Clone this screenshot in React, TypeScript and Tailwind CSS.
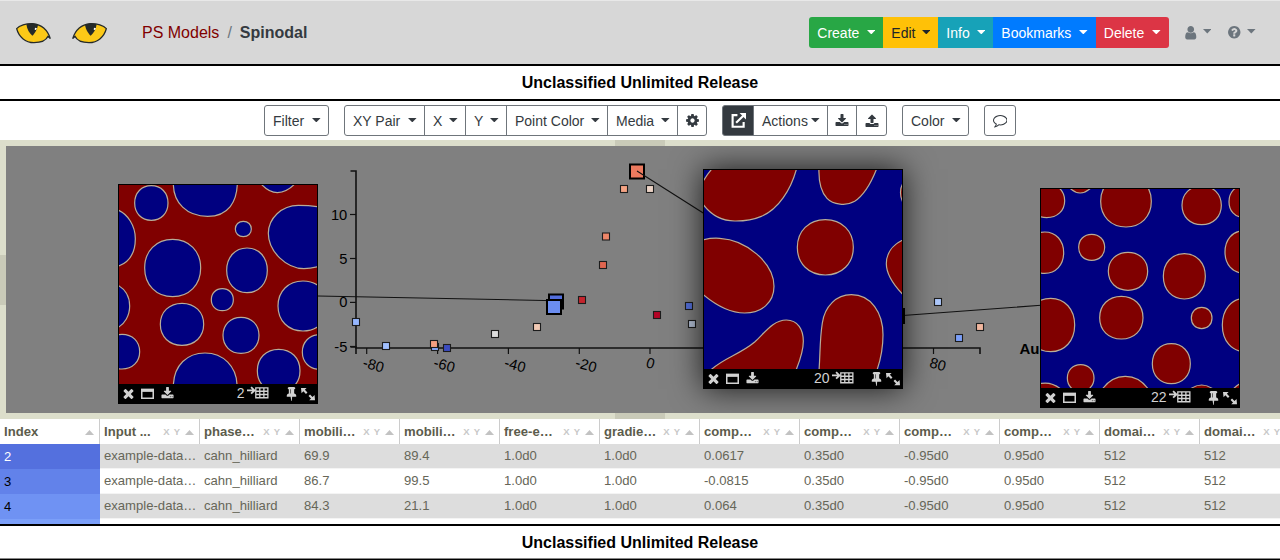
import React from "react";

const ICONS = {
  times:
    "M1490 1322q0 40-28 68l-136 136q-28 28-68 28t-68-28l-294-294-294 294q-28 28-68 28t-68-28l-136-136q-28-28-28-68t28-68l294-294-294-294q-28-28-28-68t28-68l136-136q28-28 68-28t68 28l294 294 294-294q28-28 68-28t68 28l136 136q28 28 28 68t-28 68l-294 294 294 294q28 28 28 68z",
  download:
    "M1344 1344q0-26-19-45t-45-19-45 19-19 45 19 45 45 19 45-19 19-45zm256 0q0-26-19-45t-45-19-45 19-19 45 19 45 45 19 45-19 19-45zm128-224v320q0 40-28 68t-68 28h-1472q-40 0-68-28t-28-68v-320q0-40 28-68t68-28h465l135 136q58 56 136 56t136-56l136-136h464q40 0 68 28t28 68zm-325-569q17 41-14 70l-448 448q-18 19-45 19t-45-19l-448-448q-31-29-14-70 17-39 59-39h256v-448q0-26 19-45t45-19h256q26 0 45 19t19 45v448h256q42 0 59 39z",
  upload:
    "M1344 1472q0-26-19-45t-45-19-45 19-19 45 19 45 45 19 45-19 19-45zm256 0q0-26-19-45t-45-19-45 19-19 45 19 45 45 19 45-19 19-45zm128-224v320q0 40-28 68t-68 28h-1472q-40 0-68-28t-28-68v-320q0-40 28-68t68-28h427q21 56 70.5 92t110.5 36h256q61 0 110.5-36t70.5-92h427q40 0 68 28t28 68zm-325-648q-17 40-59 40h-256v448q0 26-19 45t-45 19h-256q-26 0-45-19t-19-45v-448h-256q-42 0-59-40-17-39 14-69l448-448q18-19 45-19t45 19l448 448q31 30 14 69z",
  cog: "M1152 896q0-106-75-181t-181-75-181 75-75 181 75 181 181 75 181-75 75-181zm512-109v222q0 12-8 23t-20 13l-185 28q-19 54-39 91 35 50 107 138 10 12 10 25t-9 23q-27 37-99 108t-94 71q-12 0-26-9l-138-108q-44 23-91 38-16 136-29 186-7 28-36 28h-222q-14 0-24.5-8.5t-11.5-21.5l-28-184q-49-16-90-37l-141 107q-10 9-25 9-14 0-25-11-126-114-165-168-7-10-7-23 0-12 8-23 15-21 51-66.5t54-70.5q-27-50-41-99l-183-27q-13-2-21-12.5t-8-23.5v-222q0-12 8-23t19-13l186-28q14-46 39-92-40-57-107-138-10-12-10-24 0-10 9-23 26-36 98.5-107.5t94.5-71.5q13 0 26 10l138 107q44-23 91-38 16-136 29-186 7-28 36-28h222q14 0 24.5 8.5t11.5 21.5l28 184q49 16 90 37l142-107q9-9 24-9 13 0 25 10 129 119 165 170 7 8 7 22 0 12-8 23-15 21-51 66.5t-54 70.5q26 50 41 98l183 28q13 2 21 12.5t8 23.5z",
  user: "M1536 1399q0 109-62.5 187t-150.5 78h-854q-88 0-150.5-78t-62.5-187q0-85 8.5-160.5t31.5-152 58.5-131 94-89 134.5-34.5q131 128 313 128t313-128q76 0 134.5 34.5t94 89 58.5 131 31.5 152 8.5 160.5zm-256-887q0 159-112.5 271.5t-271.5 112.5-271.5-112.5-112.5-271.5 112.5-271.5 271.5-112.5 271.5 112.5 112.5 271.5z",
  question:
    "M1024 1376v-192q0-14-9-23t-23-9h-192q-14 0-23 9t-9 23v192q0 14 9 23t23 9h192q14 0 23-9t9-23zm256-672q0-88-55.5-163t-138.5-116-170-41q-243 0-371 213-15 24 8 42l132 100q7 6 19 6 16 0 25-12 53-68 86-92 34-24 86-24 48 0 85.5 26t37.5 59q0 38-20 61t-68 45q-63 28-115.5 86.5t-52.5 125.5v36q0 14 9 23t23 9h192q14 0 23-9t9-23q0-19 21.5-49.5t54.5-49.5q32-18 49-28.5t46-35 44.5-48 28-60.5 12.5-81zm384 192q0 209-103 385.5t-279.5 279.5-385.5 103-385.5-103-279.5-279.5-103-385.5 103-385.5 279.5-279.5 385.5-103 385.5 103 279.5 279.5 103 385.5z",
  comment:
    "M896 384q-204 0-381.5 69.5t-282 187.5-104.5 255q0 112 71.5 213.5t201.5 175.5l87 50-27 96q-24 91-70 172 152-63 275-171l43-38 57 6q69 8 130 8 204 0 381.5-69.5t282-187.5 104.5-255-104.5-255-282-187.5-381.5-69.5zm896 512q0 174-120 321.5t-326 233-450 85.5q-70 0-145-8-198 175-460 242-49 14-114 22h-5q-15 0-27-10.5t-16-27.5v-1q-3-4-.5-12t2-10 4.5-9.5l6-9 7-8.5 8-9q7-8 31-34.5t34.5-38 31-39.5 32.5-51 27-59 26-76q-157-89-247.5-220t-90.5-281q0-174 120-321.5t326-233 450-85.5 450 85.5 326 233 120 321.5z",
  pin: "M800 864v-448q0-14-9-23t-23-9-23 9-9 23v448q0 14 9 23t23 9 23-9 9-23zm672 352q0 26-19 45t-45 19h-429l-51 483q-2 12-10.5 20.5t-20.5 8.5h-1q-27 0-32-27l-76-485h-404q-26 0-45-19t-19-45q0-123 78.5-221.5t177.5-98.5v-512q-52 0-90-38t-38-90 38-90 90-38h640q52 0 90 38t38 90-38 90-90 38v512q99 0 177.5 98.5t78.5 221.5z",
};

function Icon({ name, className = "size-3.5" }: { name: keyof typeof ICONS; className?: string }) {
  return (
    <svg viewBox="0 0 1792 1792" className={`shrink-0 fill-current ${className}`}>
      <path d={ICONS[name]} />
    </svg>
  );
}

function Caret() {
  return (
    <svg viewBox="0 0 8.6 4.4" className="mb-0.5 h-[4.4px] w-[8.6px] shrink-0 fill-current">
      <path d="M0 0H8.6L4.3 4.4Z" />
    </svg>
  );
}

function Eye({ mirrored = false }: { mirrored?: boolean }) {
  return (
    <svg viewBox="48 64 105 66" className="h-[22px] w-[35px]">
      <g transform={mirrored ? "translate(201 0) scale(-1 1)" : undefined}>
        <path d="M50 83C58 75 78 68 98 69C128 72 144 90 145 104C140 119 122 126 102 126C76 126 56 108 50 83Z" fill="#fcc917" />
        <path d="M79 71C81 86 88 98 97 105C104 99 112 86 114 72C100 67 90 68 79 71Z" fill="#252a29" />
        <path
          d="M50 84C58 75 78 68 98 69C128 72 144 92 151 114C148 110 146 108 144 107C138 120 122 126 102 126C76 126 56 108 50 84Z"
          fill="none"
          stroke="#252a29"
          strokeWidth="4"
        />
      </g>
      <path d="M105 81L111 83L108 88L104 87Z" fill="#fff" transform={mirrored ? "translate(9 0)" : undefined} />
    </svg>
  );
}

function Banner() {
  return (
    <div className="pt-px text-center text-[16px] leading-[32px] font-bold text-black">Unclassified Unlimited Release</div>
  );
}

const MENUS = [
  { label: "Create", style: "w-[74px] rounded-l-[3px] bg-[#28a745] text-white" },
  { label: "Edit", style: "w-[55px] bg-[#ffc107] text-[#212529]" },
  { label: "Info", style: "w-[55px] bg-[#17a2b8] text-white" },
  { label: "Bookmarks", style: "w-[102.5px] bg-[#007bff] text-white" },
  { label: "Delete", style: "w-[73px] rounded-r-[3px] bg-[#dc3545] text-white" },
];

function Header() {
  return (
    <header className="flex h-[66px] items-center border-t border-b-2 border-t-[#e8e8e8] border-b-black bg-[#d7d7d7] pl-4">
      <div className="flex gap-[21px]">
        <Eye />
        <Eye mirrored />
      </div>
      <div className="ml-[35px] flex gap-2 pt-px text-[16px] text-[#343a40]">
        <span className="text-[#800000]">PS Models</span>
        <span className="text-[#6c757d]">/</span>
        <span className="font-bold">Spinodal</span>
      </div>
      <div className="ml-auto flex h-[31px]">
        {MENUS.map((m) => (
          <button key={m.label} className={`flex items-center justify-between px-2 pt-px ${m.style}`}>
            {m.label}
            <Caret />
          </button>
        ))}
      </div>
      <div className="ml-3.5 flex items-center gap-[4.5px] text-[#6c757d]">
        <Icon name="user" className="h-[15.5px] w-[15.5px]" />
        <Caret />
      </div>
      <div className="mr-6 ml-[15.5px] flex items-center gap-[6px] text-[#6c757d]">
        <Icon name="question" className="h-[14.5px] w-[14.5px]" />
        <Caret />
      </div>
    </header>
  );
}

function ToolButton({ label, children, className }: { label?: string; children?: React.ReactNode; className: string }) {
  return (
    <button
      className={`-ml-px flex h-[31px] items-center border border-[#6f757b] text-[#343a40] ${
        label ? "justify-between pt-px pr-[7px] pl-2" : "justify-center"
      } ${className}`}
    >
      {label}
      {label ? <Caret /> : children}
    </button>
  );
}

function Toolbar() {
  return (
    <div className="flex h-[39px] gap-4 bg-white pt-1 pl-[265px]">
      <div className="flex">
        <ToolButton label="Filter" className="w-[65px] rounded-[3px]" />
      </div>
      <div className="flex">
        <ToolButton label="XY Pair" className="w-[81px] rounded-l-[3px]" />
        <ToolButton label="X" className="w-[42px]" />
        <ToolButton label="Y" className="w-[42px]" />
        <ToolButton label="Point Color" className="w-[102px]" />
        <ToolButton label="Media" className="w-[71px]" />
        <ToolButton className="w-[30px] rounded-r-[3px]">
          <Icon name="cog" className="mb-px size-[15px]" />
        </ToolButton>
      </div>
      <div className="flex">
        <ToolButton className="w-[32px] rounded-l-[3px] bg-[#343a40] text-white">
          <svg viewBox="0 0 14 14" className="mb-px size-[15px]" fill="none" stroke="currentColor" strokeWidth="2">
            <path d="M6 2H1.5V12.8H11.8V8.5M4.8 9.2L12 2" />
            <path d="M8 0H14V6Z" fill="currentColor" stroke="none" />
          </svg>
        </ToolButton>
        <ToolButton label="Actions" className="w-[75px]" />
        <ToolButton className="w-[30px]">
          <Icon name="download" />
        </ToolButton>
        <ToolButton className="w-[31px] rounded-r-[3px]">
          <Icon name="upload" />
        </ToolButton>
      </div>
      <div className="flex">
        <ToolButton label="Color" className="w-[67px] rounded-[3px]" />
      </div>
      <div className="flex">
        <ToolButton className="w-[32px] rounded-[3px]">
          <Icon name="comment" className="size-[14.5px]" />
        </ToolButton>
      </div>
    </div>
  );
}

/* Scatter plot; coordinates are those of the page. */
const POINTS: [number, number, string][] = [
  [624, 189, "#f4a384"],
  [650, 189, "#ecd3c6"],
  [606, 236.5, "#ee8669"],
  [603, 265, "#e0654f"],
  [582, 300, "#c5242d"],
  [657, 315, "#b40426"],
  [689, 306, "#5572df"],
  [692, 324, "#b9c6dc"],
  [537, 327, "#f2cab5"],
  [495, 334, "#dddddd"],
  [435, 347, "#88abfd"],
  [434, 344, "#f5a081"],
  [447, 348, "#3b4cc0"],
  [386, 346, "#a1c0ff"],
  [356, 322, "#96b7ff"],
  [938, 302, "#aec9fc"],
  [959, 338, "#7b9ff9"],
  [980, 327, "#f2b79f"],
];

const X_TICKS: [number, string][] = [
  [366.7, "-80"],
  [437.6, "-60"],
  [508.4, "-40"],
  [579.3, "-20"],
  [650, "0"],
  [933.5, "80"],
];

const Y_TICKS: [number, string][] = [
  [214.5, "10"],
  [258.5, "5"],
  [302.4, "0"],
  [346.5, "-5"],
];

function Plot() {
  return (
    <svg viewBox="6 146 1274 267" className="block h-[267px] w-[1274px]" fontFamily="Liberation Sans, Arial, sans-serif" fontSize="14.7">
      <g fill="none" stroke="#111">
        <path d="M350.5 171H356V348H980V354" strokeWidth="1.6" />
        <path d="M350.5 347H356V354" strokeWidth="1.6" />
        {X_TICKS.map(([x]) => (
          <path key={x} d={`M${x} 348v6`} strokeWidth="1.2" />
        ))}
        {Y_TICKS.map(([y]) => (
          <path key={y} d={`M356 ${y}h-6`} strokeWidth="1.2" />
        ))}
      </g>
      {X_TICKS.map(([x, t]) => (
        <text key={x} x={x - 2} y="368" transform={`rotate(15 ${x} 357)`}>
          {t}
        </text>
      ))}
      {Y_TICKS.map(([y, t]) => (
        <text key={y} x="347.3" y={y + 5} textAnchor="end">
          {t}
        </text>
      ))}
      <text x="1019.5" y="353.5" fontSize="15" fontWeight="bold">
        Au
      </text>
      {POINTS.map(([x, y, c]) => (
        <rect key={`${x}-${y}`} x={x - 3.5} y={y - 3.5} width="7" height="7" fill={c} stroke="#1c1c1c" strokeWidth="1.1" />
      ))}
      <rect x="630" y="164.5" width="14" height="14" fill="#ec7a5f" stroke="#000" strokeWidth="2" />
      <rect x="549" y="294.5" width="14" height="14" fill="#536edd" stroke="#000" strokeWidth="2" />
      <path d="M318 296L556 300.7M637 171L704 213.5M896 316L1041 305.3" stroke="#111" strokeWidth="1.1" />
      <rect x="547" y="300" width="14" height="14" fill="#6b8df0" stroke="#000" strokeWidth="2" />
      <rect x="890" y="309" width="14" height="14" fill="#6b8df0" stroke="#000" strokeWidth="2" />
    </svg>
  );
}

function blob(cx: number, cy: number, rx: number, ry: number) {
  const a = rx * 0.59;
  const b = ry * 0.59;
  return `M${cx - rx} ${cy}C${cx - rx} ${cy - b} ${cx - a} ${cy - ry} ${cx} ${cy - ry}S${cx + rx} ${cy - b} ${cx + rx} ${cy}S${cx + a} ${cy + ry} ${cx} ${cy + ry}S${cx - rx} ${cy + b} ${cx - rx} ${cy}Z`;
}

const PHASE_2 = [
  blob(154, 99, 50, 52),
  "M220 36C218 100 262 139 323 139C385 139 412 95 412 36Z",
  blob(430, 177, 24, 23),
  "M478 36Q505 68 532 68Q565 66 589 36Z",
  "M48 118C85 130 106 170 106 206C106 250 85 280 48 291Z",
  blob(218, 294, 84, 86),
  blob(441, 301, 61, 67),
  "M662 112C640 107 620 106 595 106C545 106 505 145 505 190C505 245 560 296 612 296C630 296 645 293 662 288Z",
  blob(367, 389, 33, 33),
  blob(609, 408, 75, 75),
  "M48 343C75 355 89 380 89 408C89 435 75 465 48 475Z",
  blob(246, 463, 65, 63),
  blob(423, 496, 54, 54),
  blob(66, 545, 53, 52),
  "M220 646C222 585 262 549 315 549C370 549 410 590 411 646Z",
  blob(536, 602, 64, 64),
  blob(660, 546, 53, 52),
];

const PHASE_20 = [
  "M34 77C45 55 55 40 72 22H322C305 90 265 150 215 170C180 185 150 184 135 184C95 184 60 165 34 125Z",
  "M388 22C386 65 392 95 412 116C430 135 470 140 495 125C525 105 545 70 563 22Z",
  "M646 64C628 80 628 115 646 138Z",
  blob(407, 263, 84, 83),
  "M34 242C55 236 75 235 90 236C170 240 253 310 253 380C253 430 215 460 165 460C120 460 75 435 34 399Z",
  "M646 238C605 255 590 285 590 312C590 345 615 380 646 411Z",
  "M60 634C100 595 150 585 195 547C225 520 250 481 290 481C325 481 341 510 341 545C341 575 332 600 318 634Z",
  "M388 634C392 580 390 540 398 490C405 440 440 405 485 405C545 405 580 460 580 525C580 560 573 600 561 634Z",
];

const PHASE_22 = [
  blob(110, 92, 54, 51),
  "M172 46Q210 92 250 46Z",
  blob(348, 94, 76, 77),
  blob(575, 106, 59, 58),
  blob(700, 95, 43, 47),
  blob(104, 248, 57, 62),
  blob(245, 232, 39, 39),
  blob(354, 304, 59, 57),
  blob(523, 319, 63, 68),
  blob(700, 246, 55, 63),
  blob(122, 465, 72, 80),
  blob(334, 443, 65, 64),
  blob(575, 444, 31, 32),
  blob(705, 465, 68, 80),
  blob(484, 581, 57, 60),
  blob(212, 624, 40, 40),
  "M80 644C105 635 130 636 158 662H80Z",
  "M274 662C310 606 380 603 418 662Z",
  "M534 662Q575 628 616 662Z",
  "M666 662Q680 643 698 638V662Z",
];

function MediaPanel({
  index,
  blobs,
  viewBox,
  place,
  inverted = false,
}: {
  index: number;
  blobs: string[];
  viewBox: string;
  place: string;
  inverted?: boolean;
}) {
  return (
    <div className={`absolute flex h-[220px] w-[200px] flex-col bg-black ${place}`}>
      <div className="h-[199.5px] overflow-hidden border border-b-0 border-black">
        <svg viewBox={viewBox} className={`block h-[199px] w-[198px] ${inverted ? "bg-[#800000]" : "bg-[#000080]"}`} preserveAspectRatio="none">
          <g fill={inverted ? "#000080" : "#800000"} stroke="#b8ac98" strokeWidth="3.6">
            {blobs.map((d) => (
              <path key={d} d={d} />
            ))}
          </g>
        </svg>
      </div>
      <div className="flex h-5 items-center pl-[2.5px] text-[#d2d2d2]">
        <Icon name="times" className="size-[15px]" />
        <svg viewBox="0 0 12 10" className="ml-[5.5px] h-[11px] w-[13px]" fill="none" stroke="currentColor">
          <path d="M.7 1.5H11.3V9.3H.7Z" strokeWidth="1.4" />
          <path d="M0 2H12" strokeWidth="3" />
        </svg>
        <Icon name="download" className="mb-px ml-[7px] size-[13px]" />
        <span className="ml-auto pb-px text-[14px] leading-5">{index}</span>
        <svg viewBox="0 0 22 13" className="mb-px ml-[2px] h-[13.5px] w-[22.5px]" fill="none" stroke="currentColor">
          <path d="M0 4.2H7M4 1L7.3 4.2L4 7.4" strokeWidth="1.8" />
          <path d="M8.6 1.8H20.4V11.4H8.6ZM8.6 5H20.4M8.6 8.2H20.4M12.5 1.8V11.4M16.5 1.8V11.4" strokeWidth="1.3" />
        </svg>
        <Icon name="pin" className="ml-[14.5px] size-[15px]" />
        <svg viewBox="0 0 13 13" className="mr-[3px] ml-[2.5px] size-[14px]" fill="currentColor">
          <path d="M0 1H5.2L3.6 2.6L6 5L4.6 6.4L2.2 4L.5 5.7ZM13 12.4H7.6L9.3 10.7L7 8.4L8.4 7L10.7 9.3L12.6 7.4Z" />
        </svg>
      </div>
    </div>
  );
}

const COLUMNS = [
  "Input ...",
  "phase…",
  "mobili…",
  "mobili…",
  "free-e…",
  "gradie…",
  "comp…",
  "comp…",
  "comp…",
  "comp…",
  "domai…",
  "domai…",
];

const ROWS = [
  { index: "2", cell: "bg-[#5470de] text-white", row: "bg-[#ddd]", m: ["69.9", "89.4"], c: "0.0617" },
  { index: "3", cell: "bg-[#6282ea] text-black", row: "bg-white", m: ["86.7", "99.5"], c: "-0.0815" },
  { index: "4", cell: "bg-[#6f92f3] text-black", row: "bg-[#ddd]", m: ["84.3", "21.1"], c: "0.064" },
];

function SortArrow() {
  return (
    <svg viewBox="0 0 9 5" className="mt-0.5 h-[5px] w-[9px] shrink-0 fill-[#c2c2c2]">
      <path d="M0 5H9L4.5 0Z" />
    </svg>
  );
}

function Table() {
  return (
    <div className="h-[105px] w-[1300px] overflow-hidden bg-white text-[13.1px] text-[#666658]">
      <div className="flex h-[24.5px] font-bold text-[#5c5c4c]">
        <div className="flex w-[100px] items-center justify-between border-r border-[#ccc] pt-px pr-[5px] pl-1">
          Index
          <SortArrow />
        </div>
        {COLUMNS.map((c, i) => (
          <div key={i} className="flex w-[100px] shrink-0 items-center border-r border-[#ccc] pt-px pr-[5px] pl-1">
            <span className="mr-auto whitespace-nowrap">{c}</span>
            <span className="mr-[4px] text-[9.5px] text-[#c8c8c8]">X</span>
            <span className="mr-[5px] text-[9.5px] text-[#c8c8c8]">Y</span>
            <SortArrow />
          </div>
        ))}
      </div>
      {ROWS.map((r) => (
        <div key={r.index} className={`flex h-[25px] leading-[25px] ${r.row}`}>
          <div className={`w-[100px] pl-1 ${r.cell}`}>{r.index}</div>
          {["example-data…", "cahn_hilliard", ...r.m, "1.0d0", "1.0d0", r.c, "0.35d0", "-0.95d0", "0.95d0", "512", "512"].map((v, i) => (
            <div key={i} className="h-full w-[100px] shrink-0 border-b border-[#f4f4f4] pl-1 leading-6 whitespace-nowrap">
              {v}
            </div>
          ))}
        </div>
      ))}
      <div className="h-[6px] w-[100px] bg-[#7b9ff9]" />
    </div>
  );
}

export default function App() {
  return (
    <div className="flex h-[560px] w-[1280px] flex-col overflow-hidden bg-white font-['Liberation_Sans',Arial,sans-serif] text-[14px]">
      <Header />
      <div className="h-[35px] border-b-2 border-black">
        <Banner />
      </div>
      <Toolbar />
      <div className="flex h-1.5 shrink-0 justify-center bg-[#dcdecb]">
        <div className="w-[50px] bg-[#c9cab8]" />
      </div>
      <div className="flex h-[267px] shrink-0">
        <div className="flex w-1.5 items-center bg-[#dcdecb]">
          <div className="h-[50px] w-1.5 bg-[#c9cab8]" />
        </div>
        <div className="relative h-[267px] w-[1274px] overflow-hidden bg-[#808080]">
          <Plot />
          <MediaPanel index={2} blobs={PHASE_2} viewBox="57 45 594 597" place="top-[38px] left-[112px]" inverted />
          <MediaPanel index={22} blobs={PHASE_22} viewBox="93 57 594 597" place="top-[42px] left-[1034px]" />
          <MediaPanel index={20} blobs={PHASE_20} viewBox="43 31 594 597" place="top-[23px] left-[697px] shadow-[0_0_30px_#000000cc]" />
        </div>
      </div>
      <div className="flex h-1.5 shrink-0 justify-center bg-[#dcdecb]">
        <div className="w-[50px] bg-[#c9cab8]" />
      </div>
      <Table />
      <footer className="h-[36px] shrink-0 border-t-2 border-b border-black">
        <div className="h-[33px] border-b border-[#888]">
          <Banner />
        </div>
      </footer>
    </div>
  );
}
